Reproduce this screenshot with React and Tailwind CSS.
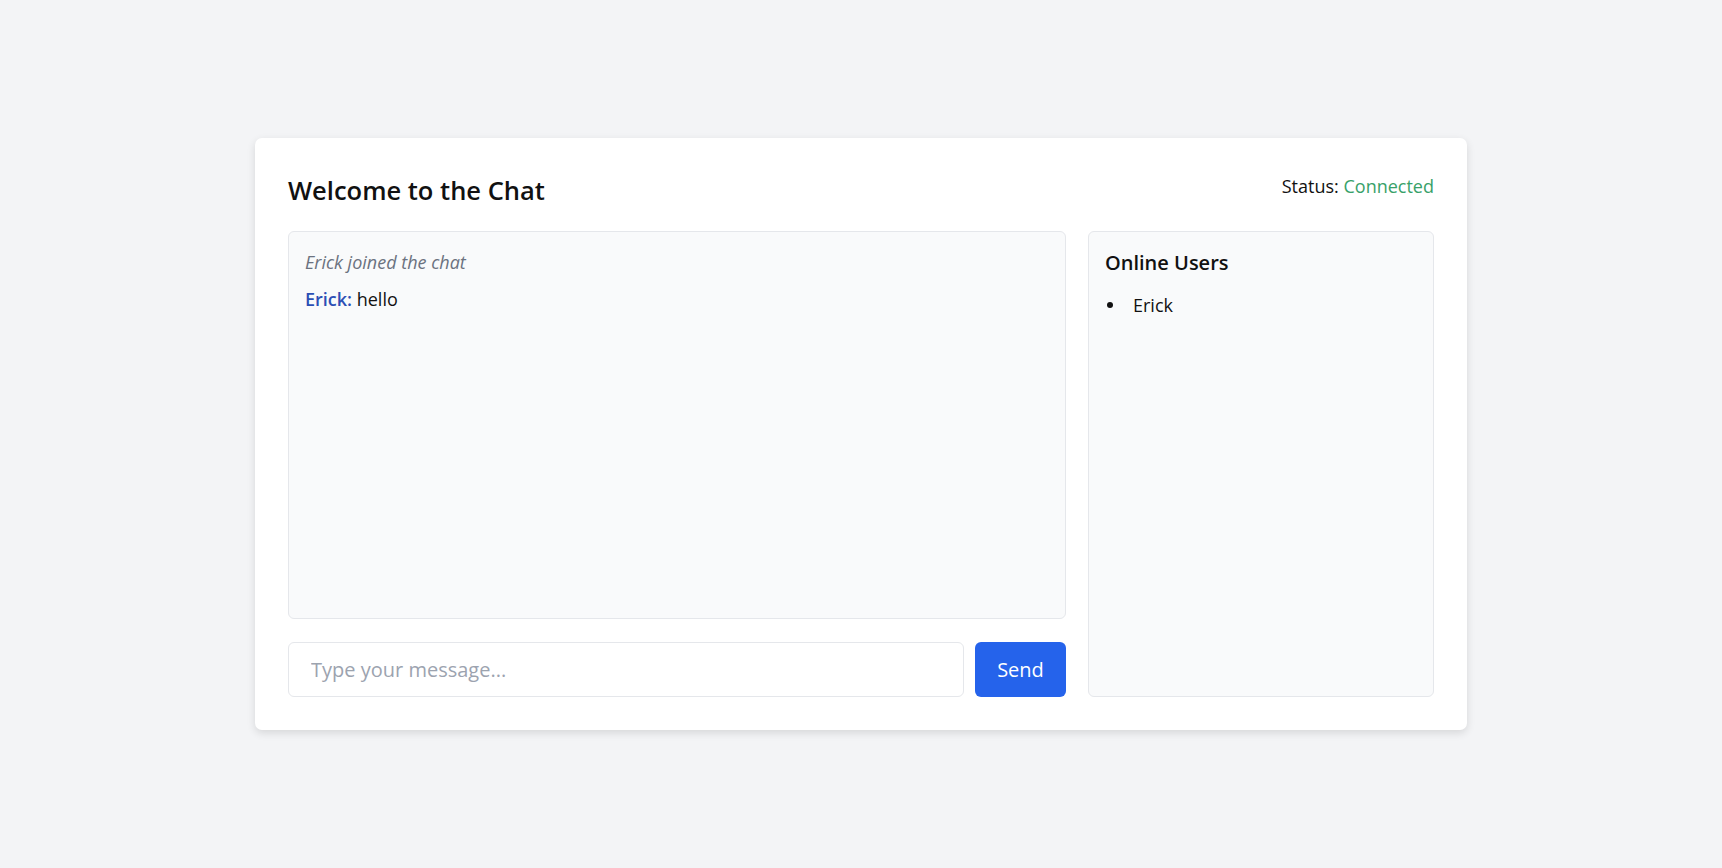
export default function App() {
    const messages = [
        { type: 'system', text: 'Erick joined the chat' },
        { type: 'chat', user: 'Erick', text: 'hello' },
    ];
    const users = ['Erick'];

    return (
        <div className="min-h-screen bg-[#f3f4f6] pt-[138px] font-['Open_Sans',sans-serif] text-[#111]">
            <div className="mx-auto w-[1212px] h-[592px] bg-white rounded-[7px] shadow-[0_3px_8px_rgba(0,0,0,0.12)] px-[33px] pt-[33px] pb-[33px] flex flex-col">
                {/* header */}
                <div className="flex justify-between items-start h-[40px] mb-[20px]">
                    <h1 className="text-[25.5px] leading-[38px] font-semibold text-[#111]">Welcome to the Chat</h1>
                    <div className="text-[18px] leading-[30px]">
                        Status: <span className="text-[#38a169]">Connected</span>
                    </div>
                </div>

                <div className="flex flex-1 gap-[22px]">
                    {/* chat column */}
                    <div className="flex flex-col flex-1">
                        <div className="flex-1 bg-[#f9fafb] border border-[#e5e7eb] rounded-[6px] p-[16px] text-[18px]">
                            {messages.map((m, i) =>
                                m.type === 'system' ? (
                                    <p key={i} className="italic text-[#6b7280] leading-[28px] mb-[9px]">{m.text}</p>
                                ) : (
                                    <p key={i} className="leading-[28px] mb-[9px]">
                                        <span className="font-semibold text-[#2c4fb5]">{m.user}:</span> {m.text}
                                    </p>
                                )
                            )}
                        </div>
                        <div className="flex gap-[11px] mt-[23px] h-[55px]">
                            <input
                                type="text"
                                placeholder="Type your message..."
                                className="flex-1 border border-[#e5e7eb] rounded-[6px] px-[22px] text-[20px] placeholder:text-[#9ca3af] outline-none"
                            />
                            <button className="w-[91px] bg-[#2563eb] text-white text-[20px] rounded-[6px]">Send</button>
                        </div>
                    </div>

                    {/* online users */}
                    <div className="w-[346px] bg-[#f9fafb] border border-[#e5e7eb] rounded-[6px] p-[16px]">
                        <h2 className="text-[20px] font-semibold leading-[30px] mb-[14px]">Online Users</h2>
                        <ul className="text-[18px]">
                            {users.map((u) => (
                                <li key={u} className="flex items-center leading-[26px]">
                                    <span className="w-[6px] h-[6px] rounded-full bg-[#111] ml-[2px] mr-[20px]"></span>
                                    {u}
                                </li>
                            ))}
                        </ul>
                    </div>
                </div>
            </div>
        </div>
    );
}
